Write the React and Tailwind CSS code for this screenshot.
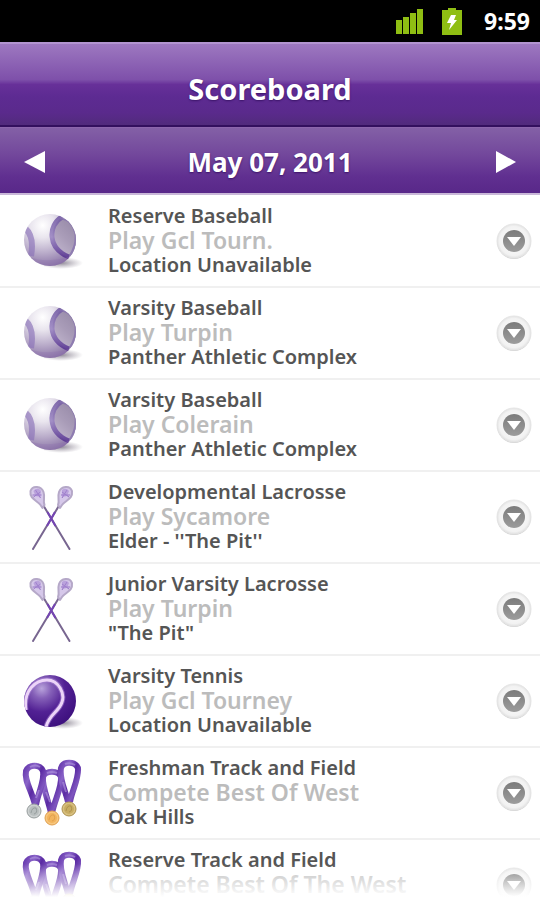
import React from 'react';

const events = [
  { icon: 'baseball', team: 'Reserve Baseball', game: 'Play Gcl Tourn.', place: 'Location Unavailable' },
  { icon: 'baseball', team: 'Varsity Baseball', game: 'Play Turpin', place: 'Panther Athletic Complex' },
  { icon: 'baseball', team: 'Varsity Baseball', game: 'Play Colerain', place: 'Panther Athletic Complex' },
  { icon: 'lacrosse', team: 'Developmental Lacrosse', game: 'Play Sycamore', place: "Elder - ''The Pit''" },
  { icon: 'lacrosse', team: 'Junior Varsity Lacrosse', game: 'Play Turpin', place: '"The Pit"' },
  { icon: 'tennis', team: 'Varsity Tennis', game: 'Play Gcl Tourney', place: 'Location Unavailable' },
  { icon: 'medals', team: 'Freshman Track and Field', game: 'Compete Best Of West', place: 'Oak Hills' },
  { icon: 'medals', team: 'Reserve Track and Field', game: 'Compete Best Of The West' },
];

function Gradients() {
  return (
    <svg width="0" height="0" className="absolute" aria-hidden="true">
      <defs>
        <radialGradient id="baseball" cx="0.36" cy="0.22" r="0.8">
          <stop offset="0" stopColor="#ffffff" />
          <stop offset="0.3" stopColor="#e9e5ee" />
          <stop offset="0.65" stopColor="#bbaecb" />
          <stop offset="1" stopColor="#8a74a6" />
        </radialGradient>
        <linearGradient id="baseballPanel" x1="1" y1="0" x2="0.2" y2="1">
          <stop offset="0" stopColor="#8d809f" />
          <stop offset="0.6" stopColor="#a99cb8" />
          <stop offset="1" stopColor="#c3b8cf" />
        </linearGradient>
        <linearGradient id="seam" x1="0" y1="0" x2="0" y2="1">
          <stop offset="0" stopColor="#6e55a0" />
          <stop offset="0.5" stopColor="#9781c0" />
          <stop offset="1" stopColor="#54308f" />
        </linearGradient>
        <radialGradient id="tennis" cx="0.34" cy="0.26" r="0.75">
          <stop offset="0" stopColor="#b9a3dc" />
          <stop offset="0.25" stopColor="#8560b8" />
          <stop offset="0.6" stopColor="#522194" />
          <stop offset="1" stopColor="#3f1280" />
        </radialGradient>
        <radialGradient id="shadow">
          <stop offset="0" stopColor="#6b6375" stopOpacity="0.75" />
          <stop offset="1" stopColor="#8c8494" stopOpacity="0" />
        </radialGradient>
        <linearGradient id="ribbon" x1="0" y1="0" x2="1" y2="1">
          <stop offset="0" stopColor="#6a3db0" />
          <stop offset="0.25" stopColor="#8a64c8" />
          <stop offset="0.5" stopColor="#5a2aa3" />
          <stop offset="0.75" stopColor="#7f56bf" />
          <stop offset="1" stopColor="#4c1b94" />
        </linearGradient>
        <radialGradient id="arrowRing">
          <stop offset="0.6" stopColor="#f6f6f6" />
          <stop offset="0.86" stopColor="#f2f2f2" />
          <stop offset="1" stopColor="#e2e2e2" />
        </radialGradient>
        <linearGradient id="arrowDisc" x1="0" y1="0" x2="0" y2="1">
          <stop offset="0" stopColor="#7c7c7c" />
          <stop offset="1" stopColor="#9c9c9c" />
        </linearGradient>
        <clipPath id="ball">
          <circle cx="50" cy="44" r="26" />
        </clipPath>
        <clipPath id="tennisClip">
          <circle cx="50" cy="45" r="26" />
        </clipPath>
      </defs>
    </svg>
  );
}

function Baseball() {
  return (
    <g>
      <ellipse cx="61" cy="67" rx="22" ry="6" fill="url(#shadow)" />
      <circle cx="50" cy="44" r="26" fill="url(#baseball)" />
      <g clipPath="url(#ball)">
        <path d="M60 23C50 32 48 50 68 62L84 50V22Z" fill="url(#baseballPanel)" />
        <path d="M62 21C48 29 47 52 69 61" fill="none" stroke="url(#seam)" strokeWidth="5" opacity="0.85" />
        <path d="M60 22Q72 22 76 38Q77 50 70 60" fill="none" stroke="#8470ae" strokeWidth="3" opacity="0.75" />
        <path d="M25 32C32 38 33 49 31 60" fill="none" stroke="#8a72b8" strokeWidth="6" opacity="0.65" />
        <path d="M24 59Q48 70 76 58V74H24Z" fill="#8d72ae" opacity="0.3" />
      </g>
    </g>
  );
}

function TennisBall() {
  return (
    <g>
      <ellipse cx="63" cy="67" rx="20" ry="6" fill="url(#shadow)" />
      <circle cx="50" cy="45" r="26" fill="url(#tennis)" />
      <g clipPath="url(#tennisClip)" fill="none">
        <path d="M26 54C23 34 36 24 47 24C59 24 65 38 62 46C59 56 49 58 46 71" stroke="#a680d4" strokeWidth="5" opacity="0.6" />
        <path d="M26 54C23 34 36 24 47 24C59 24 65 38 62 46C59 56 49 58 46 71" stroke="#ecd4f8" strokeWidth="3" />
      </g>
    </g>
  );
}

function LacrosseStick() {
  return (
    <g>
      <path d="M60 32L33 77" stroke="#786690" strokeWidth="2" strokeLinecap="round" />
      <path d="M55 40L47 54" stroke="#7544b4" strokeWidth="2" />
      <path d="M58 33C60 29 57 26 59 20C61 14 70 13 72 19C73 27 66 28 62 33L60 36Z" fill="#d6c8ea" stroke="#b5a8c8" strokeWidth="2" strokeLinejoin="round" />
      <path d="M62 20L69 25M67 18L62 26M61 23H70" stroke="#9675c6" strokeWidth="1" />
      <path d="M62 18Q66 15 69 19L67 24L62 25Z" fill="#a688d2" opacity="0.6" />
    </g>
  );
}

function Lacrosse() {
  return (
    <g>
      <g transform="translate(102.500 0) scale(-1 1)">
        <LacrosseStick />
      </g>
      <LacrosseStick />
    </g>
  );
}

function Medal({ x, y, light, mid, dark }) {
  return (
    <g>
      <circle cx={x} cy={y} r="7" fill={mid} stroke={dark} strokeWidth="1" />
      <circle cx={x} cy={y} r="5" fill={light} />
      <path d={`M${x - 3} ${y + 2}Q${x - 2} ${y - 4} ${x + 2} ${y - 3}Q${x + 4} ${y + 2} ${x} ${y + 3}`} fill="none" stroke={dark} strokeWidth="1" />
    </g>
  );
}

function Medals() {
  return (
    <g>
      <g fill="none" stroke="url(#ribbon)" strokeWidth="6" strokeLinejoin="round">
        <path d="M51 65C48 51 42 39 43 29C45 22 59 22 61 29C62 39 55 51 52 65" />
        <path d="M35 57C32 43 24 33 26 23C29 16 40 16 43 23C45 33 38 45 36 57" />
        <path d="M68 54C65 41 59 31 61 20C63 13 75 13 78 20C79 31 72 42 70 54" />
      </g>
      <g fill="none" stroke="#b397df" strokeWidth="2" opacity="0.6">
        <path d="M30 19Q35 16 40 19M47 25Q52 23 57 25M65 16Q70 14 75 17M39 42L36 50M63 34L66 44M46 44L50 54" />
      </g>
      <Medal x={34} y={63} light="#b8bebe" mid="#ccd0d0" dark="#979e9e" />
      <Medal x={52} y={70} light="#f2b45e" mid="#f7c67d" dark="#e0a050" />
      <Medal x={69} y={61} light="#c8ac62" mid="#d8c080" dark="#ad9250" />
    </g>
  );
}

const drawings = { baseball: Baseball, tennis: TennisBall, lacrosse: Lacrosse, medals: Medals };

function EventRow({ event }) {
  const Drawing = drawings[event.icon];
  return (
    <li className="flex h-[92px] shrink-0 items-start border-b-2 border-[#f0f0f0] pr-2 pl-5">
      <svg viewBox="20 0 64 90" className="h-[90px] w-16 shrink-0" aria-hidden="true">
        <Drawing />
      </svg>
      <div className="mt-2 ml-6 min-w-0 flex-1 text-[20px] leading-6 font-semibold whitespace-nowrap text-[#555555]">
        <h2>{event.team}</h2>
        <p className="text-[23px] leading-[25px] text-[#bcbcbc]">{event.game}</p>
        {event.place && <p>{event.place}</p>}
      </div>
      <button type="button" aria-label={`Show details for ${event.team}`} className="mt-[27px] shrink-0">
        <svg viewBox="0 0 36 36" className="size-9">
          <circle cx="18" cy="19" r="17" fill="#b0b0b0" opacity="0.6" />
          <circle cx="18" cy="18" r="17" fill="url(#arrowRing)" stroke="#e6e6e6" strokeWidth="1" />
          <circle cx="18" cy="18" r="11" fill="url(#arrowDisc)" />
          <path d="M11 14H25L18 23Z" fill="#fff" />
        </svg>
      </button>
    </li>
  );
}

export default function App() {
  return (
    <div className="relative flex h-screen flex-col overflow-hidden bg-white font-['Noto_Sans',sans-serif]">
      <Gradients />
      <div className="flex h-[42px] shrink-0 items-center justify-end bg-black pr-[10px] text-white">
        <svg viewBox="0 0 28 28" className="mr-[18px] size-7" fill="#8fbe13" aria-hidden="true">
          <path d="M0 13h6v14H0zM7 10h6v17H7zM14 6h6v21h-6zM21 2h6v25h-6z" />
        </svg>
        <svg viewBox="0 0 20 28" className="mr-[22px] h-7 w-5" aria-hidden="true">
          <path d="M6 1h8v2h6v25H0V3h6z" fill="#8fbe13" />
          <path d="M9 8H14L12 13H15L7 23L9 16H5Z" fill="#fff" />
        </svg>
        <time className="text-[23px] leading-7 font-bold">9:59</time>
      </div>
      <header className="flex h-[85px] shrink-0 items-center justify-center border-t-2 border-b-2 border-t-[#b294d0] border-b-[#33105e] bg-linear-[to_bottom,#9d78c0_0%,#7e50aa_44%,#673099_50%,#5d2b92_65%,#5a2a8c_85%,#512b7c_100%] pt-2 text-white">
        <h1 className="text-[29px] leading-9 font-bold text-shadow-[0_1px_2px_#3b1468]">Scoreboard</h1>
      </header>
      <nav className="flex h-[68px] shrink-0 items-center justify-between border-t border-b-2 border-t-[#8c66ac] border-b-[#c9b8d8] bg-linear-[to_bottom,#8360a6_0%,#73489c_40%,#602f90_75%,#582889_100%] px-6 pt-[3px] text-white">
        <button type="button" aria-label="Previous day">
          <svg viewBox="0 0 22 22" className="size-[22px]" fill="#fff"><path d="M0 11L21 0V22Z" /></svg>
        </button>
        <h2 className="text-[26px] leading-9 font-bold text-shadow-[0_1px_2px_#3b1468]">May 07, 2011</h2>
        <button type="button" aria-label="Next day">
          <svg viewBox="0 0 22 22" className="size-[22px]" fill="#fff"><path d="M22 11L2 0V22Z" /></svg>
        </button>
      </nav>
      <ul className="flex min-h-0 flex-1 flex-col overflow-hidden pt-px">
        {events.map((event, i) => (
          <EventRow key={i} event={event} />
        ))}
      </ul>
      <div className="pointer-events-none absolute inset-x-0 bottom-0 h-9 bg-linear-[to_bottom,transparent,#ffffff_92%]" />
    </div>
  );
}
